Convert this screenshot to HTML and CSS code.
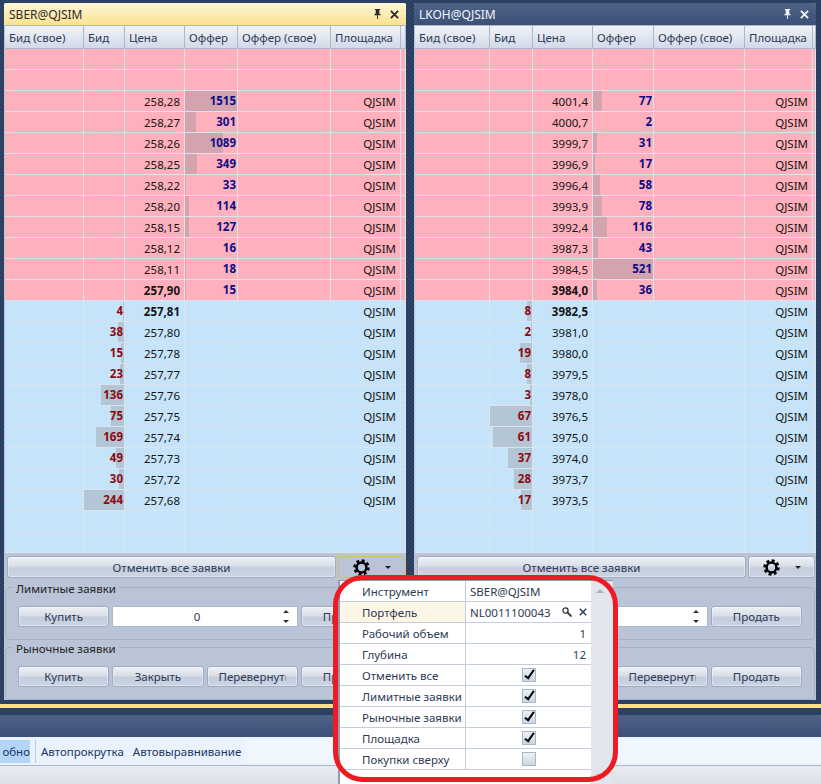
FILE: index.html
```html
<!DOCTYPE html>
<html>
  <head>
    <title>Стакан</title>
    <link rel="stylesheet" href="styles.css">
  </head>

  <body>
    <svg class="defs" width="0" height="0">
      <symbol id="gear" viewBox="0 0 18 18">
        <circle cx="9" cy="9" r="5.2" fill="none" stroke="#000" stroke-width="2.6"/>
        <circle cx="9" cy="9" r="7.2" fill="none" stroke="#000" stroke-width="3" stroke-dasharray="3 2.65"/>
      </symbol>
      <symbol id="pin" viewBox="0 0 10 11">
        <path d="M2 0h6v1H7v4l1.500 1v1H5.500v4h-1V7H1.500V6L3 5V1H2z"/>
      </symbol>
      <symbol id="cross" viewBox="0 0 10 10">
        <path d="M1 1l8 8M9 1l-8 8" fill="none" stroke="currentColor" stroke-width="2"/>
      </symbol>
    </svg>

    <div class="workspace">

      <div class="panel">
        <div class="title active">
          <span class="title-text">SBER@QJSIM</span>
          <svg class="pin"><use href="#pin"/></svg>
          <svg class="close"><use href="#cross"/></svg>
        </div>
        <table class="book book-sber">
          <colgroup><col class="c1"><col class="c2"><col class="c3"><col class="c4"><col class="c5"><col class="c6"><col></colgroup>
          <thead><tr><th>Бид (свое)</th><th>Бид</th><th>Цена</th><th>Оффер</th><th>Оффер (свое)</th><th>Площадка</th><th></th></tr></thead>
          <tbody class="asks">
            <tr><td></td><td></td><td></td><td></td><td></td><td></td><td></td></tr>
            <tr><td></td><td></td><td></td><td></td><td></td><td></td><td></td></tr>
            <tr><td></td><td></td><td class="price">258,28</td><td class="offer"><i class="bar" style="width:53px"></i><b>1515</b></td><td></td><td class="board">QJSIM</td><td></td></tr>
            <tr><td></td><td></td><td class="price">258,27</td><td class="offer"><i class="bar" style="width:11px"></i><b>301</b></td><td></td><td class="board">QJSIM</td><td></td></tr>
            <tr><td></td><td></td><td class="price">258,26</td><td class="offer"><i class="bar" style="width:38px"></i><b>1089</b></td><td></td><td class="board">QJSIM</td><td></td></tr>
            <tr><td></td><td></td><td class="price">258,25</td><td class="offer"><i class="bar" style="width:12px"></i><b>349</b></td><td></td><td class="board">QJSIM</td><td></td></tr>
            <tr><td></td><td></td><td class="price">258,22</td><td class="offer"><i class="bar" style="width:1px"></i><b>33</b></td><td></td><td class="board">QJSIM</td><td></td></tr>
            <tr><td></td><td></td><td class="price">258,20</td><td class="offer"><i class="bar" style="width:4px"></i><b>114</b></td><td></td><td class="board">QJSIM</td><td></td></tr>
            <tr><td></td><td></td><td class="price">258,15</td><td class="offer"><i class="bar" style="width:4px"></i><b>127</b></td><td></td><td class="board">QJSIM</td><td></td></tr>
            <tr><td></td><td></td><td class="price">258,12</td><td class="offer"><i class="bar" style="width:1px"></i><b>16</b></td><td></td><td class="board">QJSIM</td><td></td></tr>
            <tr><td></td><td></td><td class="price">258,11</td><td class="offer"><i class="bar" style="width:1px"></i><b>18</b></td><td></td><td class="board">QJSIM</td><td></td></tr>
            <tr><td></td><td></td><td class="price best">257,90</td><td class="offer"><i class="bar" style="width:1px"></i><b>15</b></td><td></td><td class="board">QJSIM</td><td></td></tr>
          </tbody>
          <tbody class="bids">
            <tr><td></td><td class="bid"><i class="bar" style="width:1px"></i><b>4</b></td><td class="price best">257,81</td><td></td><td></td><td class="board">QJSIM</td><td></td></tr>
            <tr><td></td><td class="bid"><i class="bar" style="width:6px"></i><b>38</b></td><td class="price">257,80</td><td></td><td></td><td class="board">QJSIM</td><td></td></tr>
            <tr><td></td><td class="bid"><i class="bar" style="width:3px"></i><b>15</b></td><td class="price">257,78</td><td></td><td></td><td class="board">QJSIM</td><td></td></tr>
            <tr><td></td><td class="bid"><i class="bar" style="width:4px"></i><b>23</b></td><td class="price">257,77</td><td></td><td></td><td class="board">QJSIM</td><td></td></tr>
            <tr><td></td><td class="bid"><i class="bar" style="width:23px"></i><b>136</b></td><td class="price">257,76</td><td></td><td></td><td class="board">QJSIM</td><td></td></tr>
            <tr><td></td><td class="bid"><i class="bar" style="width:13px"></i><b>75</b></td><td class="price">257,75</td><td></td><td></td><td class="board">QJSIM</td><td></td></tr>
            <tr><td></td><td class="bid"><i class="bar" style="width:28px"></i><b>169</b></td><td class="price">257,74</td><td></td><td></td><td class="board">QJSIM</td><td></td></tr>
            <tr><td></td><td class="bid"><i class="bar" style="width:8px"></i><b>49</b></td><td class="price">257,73</td><td></td><td></td><td class="board">QJSIM</td><td></td></tr>
            <tr><td></td><td class="bid"><i class="bar" style="width:5px"></i><b>30</b></td><td class="price">257,72</td><td></td><td></td><td class="board">QJSIM</td><td></td></tr>
            <tr><td></td><td class="bid"><i class="bar" style="width:41px"></i><b>244</b></td><td class="price">257,68</td><td></td><td></td><td class="board">QJSIM</td><td></td></tr>
            <tr><td></td><td></td><td></td><td></td><td></td><td></td><td></td></tr>
            <tr><td></td><td></td><td></td><td></td><td></td><td></td><td></td></tr>
          </tbody>
        </table>
        <div class="actions">
          <button class="btn cancel-all">Отменить все заявки</button>
          <button class="btn gear-btn open"><svg class="gear"><use href="#gear"/></svg><span class="caret"></span></button>
        </div>
        <fieldset class="group">
          <legend>Лимитные заявки</legend>
          <div class="group-row">
            <button class="btn">Купить</button>
            <div class="spin"><span class="spin-value">0</span><span class="spin-arrows"><span class="up"></span><span class="down"></span></span></div>
            <button class="btn">Продать</button>
          </div>
        </fieldset>
        <fieldset class="group">
          <legend>Рыночные заявки</legend>
          <div class="group-row">
            <button class="btn">Купить</button>
            <button class="btn">Закрыть</button>
            <button class="btn clip"><span>Перевернуть</span></button>
            <button class="btn">Продать</button>
          </div>
        </fieldset>
      </div>

      <div class="panel">
        <div class="title">
          <span class="title-text">LKOH@QJSIM</span>
          <svg class="pin"><use href="#pin"/></svg>
          <svg class="close"><use href="#cross"/></svg>
        </div>
        <table class="book book-lkoh">
          <colgroup><col class="c1"><col class="c2"><col class="c3"><col class="c4"><col class="c5"><col class="c6"><col></colgroup>
          <thead><tr><th>Бид (свое)</th><th>Бид</th><th>Цена</th><th>Оффер</th><th>Оффер (свое)</th><th>Площадка</th><th></th></tr></thead>
          <tbody class="asks">
            <tr><td></td><td></td><td></td><td></td><td></td><td></td><td></td></tr>
            <tr><td></td><td></td><td></td><td></td><td></td><td></td><td></td></tr>
            <tr><td></td><td></td><td class="price">4001,4</td><td class="offer"><i class="bar" style="width:9px"></i><b>77</b></td><td></td><td class="board">QJSIM</td><td></td></tr>
            <tr><td></td><td></td><td class="price">4000,7</td><td class="offer"><b>2</b></td><td></td><td class="board">QJSIM</td><td></td></tr>
            <tr><td></td><td></td><td class="price">3999,7</td><td class="offer"><i class="bar" style="width:4px"></i><b>31</b></td><td></td><td class="board">QJSIM</td><td></td></tr>
            <tr><td></td><td></td><td class="price">3996,9</td><td class="offer"><i class="bar" style="width:2px"></i><b>17</b></td><td></td><td class="board">QJSIM</td><td></td></tr>
            <tr><td></td><td></td><td class="price">3996,4</td><td class="offer"><i class="bar" style="width:7px"></i><b>58</b></td><td></td><td class="board">QJSIM</td><td></td></tr>
            <tr><td></td><td></td><td class="price">3993,9</td><td class="offer"><i class="bar" style="width:9px"></i><b>78</b></td><td></td><td class="board">QJSIM</td><td></td></tr>
            <tr><td></td><td></td><td class="price">3992,4</td><td class="offer"><i class="bar" style="width:14px"></i><b>116</b></td><td></td><td class="board">QJSIM</td><td></td></tr>
            <tr><td></td><td></td><td class="price">3987,3</td><td class="offer"><i class="bar" style="width:5px"></i><b>43</b></td><td></td><td class="board">QJSIM</td><td></td></tr>
            <tr><td></td><td></td><td class="price">3984,5</td><td class="offer"><i class="bar" style="width:61px"></i><b>521</b></td><td></td><td class="board">QJSIM</td><td></td></tr>
            <tr><td></td><td></td><td class="price best">3984,0</td><td class="offer"><i class="bar" style="width:4px"></i><b>36</b></td><td></td><td class="board">QJSIM</td><td></td></tr>
          </tbody>
          <tbody class="bids">
            <tr><td></td><td class="bid"><i class="bar" style="width:5px"></i><b>8</b></td><td class="price best">3982,5</td><td></td><td></td><td class="board">QJSIM</td><td></td></tr>
            <tr><td></td><td class="bid"><i class="bar" style="width:1px"></i><b>2</b></td><td class="price">3981,0</td><td></td><td></td><td class="board">QJSIM</td><td></td></tr>
            <tr><td></td><td class="bid"><i class="bar" style="width:12px"></i><b>19</b></td><td class="price">3980,0</td><td></td><td></td><td class="board">QJSIM</td><td></td></tr>
            <tr><td></td><td class="bid"><i class="bar" style="width:5px"></i><b>8</b></td><td class="price">3979,5</td><td></td><td></td><td class="board">QJSIM</td><td></td></tr>
            <tr><td></td><td class="bid"><i class="bar" style="width:2px"></i><b>3</b></td><td class="price">3978,0</td><td></td><td></td><td class="board">QJSIM</td><td></td></tr>
            <tr><td></td><td class="bid"><i class="bar" style="width:43px"></i><b>67</b></td><td class="price">3976,5</td><td></td><td></td><td class="board">QJSIM</td><td></td></tr>
            <tr><td></td><td class="bid"><i class="bar" style="width:39px"></i><b>61</b></td><td class="price">3975,0</td><td></td><td></td><td class="board">QJSIM</td><td></td></tr>
            <tr><td></td><td class="bid"><i class="bar" style="width:24px"></i><b>37</b></td><td class="price">3974,0</td><td></td><td></td><td class="board">QJSIM</td><td></td></tr>
            <tr><td></td><td class="bid"><i class="bar" style="width:18px"></i><b>28</b></td><td class="price">3973,7</td><td></td><td></td><td class="board">QJSIM</td><td></td></tr>
            <tr><td></td><td class="bid"><i class="bar" style="width:11px"></i><b>17</b></td><td class="price">3973,5</td><td></td><td></td><td class="board">QJSIM</td><td></td></tr>
            <tr><td></td><td></td><td></td><td></td><td></td><td></td><td></td></tr>
            <tr><td></td><td></td><td></td><td></td><td></td><td></td><td></td></tr>
          </tbody>
        </table>
        <div class="actions">
          <button class="btn cancel-all">Отменить все заявки</button>
          <button class="btn gear-btn"><svg class="gear"><use href="#gear"/></svg><span class="caret"></span></button>
        </div>
        <fieldset class="group">
          <legend>Лимитные заявки</legend>
          <div class="group-row">
            <button class="btn">Купить</button>
            <div class="spin"><span class="spin-value">0</span><span class="spin-arrows"><span class="up"></span><span class="down"></span></span></div>
            <button class="btn">Продать</button>
          </div>
        </fieldset>
        <fieldset class="group">
          <legend>Рыночные заявки</legend>
          <div class="group-row">
            <button class="btn">Купить</button>
            <button class="btn">Закрыть</button>
            <button class="btn clip"><span>Перевернуть</span></button>
            <button class="btn">Продать</button>
          </div>
        </fieldset>
      </div>

    </div>

    <div class="bottom-accent"></div>
    <div class="bottom-title"></div>
    <div class="bottom-tools">
      <span class="tool on">обно</span>
      <span class="tool-sep"></span>
      <span class="tool">Автопрокрутка</span>
      <span class="tool">Автовыравнивание</span>
      <span class="tool-rest"></span>
    </div>
    <div class="bottom-status"></div>

    <div class="popup">
      <table class="props">
        <tr><td>Инструмент</td><td class="val">SBER@QJSIM</td></tr>
        <tr class="hot"><td>Портфель</td><td class="val portfolio">NL0011100043
          <svg class="lens" viewBox="0 0 10 10"><circle cx="3.500" cy="3.500" r="2.600" fill="none" stroke="#333" stroke-width="1.300"/><path d="M5.500 5.500L9.500 9.500" stroke="#333" stroke-width="1.800"/></svg>
          <svg class="clear"><use href="#cross"/></svg></td></tr>
        <tr><td>Рабочий объем</td><td class="num">1</td></tr>
        <tr><td>Глубина</td><td class="num">12</td></tr>
        <tr><td>Отменить все</td><td class="chk"><span class="box on"></span></td></tr>
        <tr><td>Лимитные заявки</td><td class="chk"><span class="box on"></span></td></tr>
        <tr><td>Рыночные заявки</td><td class="chk"><span class="box on"></span></td></tr>
        <tr><td>Площадка</td><td class="chk"><span class="box on"></span></td></tr>
        <tr><td>Покупки сверху</td><td class="chk"><span class="box"></span></td></tr>
      </table>
      <div class="vscroll"><span class="up"></span><span class="down"></span></div>
    </div>
    <div class="red-mark"></div>
  </body>
</html>
```

FILE: styles.css
```css
html, body {
  margin: 0;
  height: 100%;
}
body {
  width: 821px;
  height: 784px;
  overflow: hidden;
  position: relative;
  font-family: "Noto Sans", "Open Sans", sans-serif;
  font-size: 11.5px;
  color: #2b3a55;
  background-color: #293d5e;
  background-image:
    linear-gradient(45deg, #2f4568 25%, transparent 25%, transparent 75%, #2f4568 75%),
    linear-gradient(45deg, #2f4568 25%, transparent 25%, transparent 75%, #2f4568 75%);
  background-size: 4px 4px;
  background-position: 0 0, 2px 2px;
}
.defs {
  position: absolute;
}

.workspace {
  display: flex;
  gap: 8px;
  padding: 3px 0 0 4px;
}
.panel {
  width: 402px;
  height: 697px;
  background: #b9c5d7;
  border-radius: 2px 2px 0 0;
}

.title {
  display: flex;
  align-items: center;
  height: 22px;
  padding: 0 7px 0 5px;
  color: #f3f6fb;
  font-size: 12px;
  background: linear-gradient(#4f6388, #3c5078);
  border-radius: 2px 2px 0 0;
}
.title.active {
  color: #2b2b2b;
  background: linear-gradient(#fdf7d8, #fbe190);
}
.title-text {
  flex: 1;
}
.pin {
  width: 9px;
  height: 10px;
  fill: currentColor;
  margin-right: 8px;
}
.close {
  width: 9px;
  height: 9px;
}

.book {
  table-layout: fixed;
  border-collapse: separate;
  border-spacing: 0;
  width: 401px;
  margin-left: 1px;
  color: #141414;
}
.book-sber .c1 { width: 79px; }
.book-sber .c2 { width: 41px; }
.book-sber .c3 { width: 60px; }
.book-sber .c4 { width: 53px; }
.book-sber .c5 { width: 93px; }
.book-sber .c6 { width: 70px; }
.book-lkoh .c1 { width: 75px; }
.book-lkoh .c2 { width: 43px; }
.book-lkoh .c3 { width: 60px; }
.book-lkoh .c4 { width: 61px; }
.book-lkoh .c5 { width: 91px; }
.book-lkoh .c6 { width: 68px; }

.book th {
  height: 24px;
  padding: 0 0 0 4px;
  box-sizing: border-box;
  overflow: hidden;
  white-space: nowrap;
  text-align: left;
  font-weight: normal;
  color: #2b3a55;
  background: linear-gradient(#f0f3f8, #d2dae7);
  border-right: 1px solid #aab7ce;
  border-top: 1px solid #a9b6cd;
  border-bottom: 1px solid #a9b6cd;
}
.book td {
  position: relative;
  height: 21px;
  padding: 0;
  box-sizing: border-box;
  overflow: hidden;
  white-space: nowrap;
  text-align: right;
  border-right: 1px solid #dbe3ee;
  border-bottom: 1px solid #dbe3ee;
}
.asks td {
  background: #ffb0bd;
}
.bids td {
  background: #c6e4f9;
}
.book td.price,
.book td.board {
  padding-right: 4px;
}
.best {
  font-weight: bold;
}
.book b {
  position: relative;
  top: -1px;
  padding-right: 1px;
}
.offer b {
  color: #0d0d85;
}
.bid b {
  color: #8c0a12;
}
.bar {
  position: absolute;
  top: 0;
  bottom: 0;
}
.offer .bar {
  left: 0;
  background: #d3a3ae;
}
.bid .bar {
  right: 0;
  background: #b4c5d5;
}

.actions {
  display: flex;
  gap: 2px;
  padding: 3px 1px 0 3px;
  height: 22px;
}
.btn {
  font: inherit;
  color: #2b3a55;
  height: 21px;
  padding: 0;
  border: 1px solid #9eacc4;
  border-radius: 3px;
  background: linear-gradient(#eef1f5, #d9dee7 45%, #c5cedd 55%, #ccd4e2);
  box-shadow: inset 0 0 0 1px rgba(255, 255, 255, .35);
  overflow: hidden;
  white-space: nowrap;
}
.cancel-all {
  flex: 1;
  height: 22px;
}
.gear-btn {
  display: flex;
  align-items: center;
  width: 67px;
  height: 22px;
  padding-left: 14px;
  box-sizing: border-box;
}
.gear-btn.open {
  border-color: #d9bd6a;
  background: #b9c5d7;
  box-shadow: none;
}
.gear {
  width: 17px;
  height: 17px;
}
.caret {
  width: 0;
  height: 0;
  margin-left: 15px;
  border: 3px solid transparent;
  border-top-color: #222;
  border-bottom-width: 0;
}

.group {
  margin: 0 1px;
  padding: 12px 12px 0;
  height: 60px;
  box-sizing: border-box;
  border: 1px solid #a5b2c7;
  border-radius: 4px;
}
.actions + .group {
  margin-top: 2px;
}
.group legend {
  position: relative;
  top: 2px;
  padding: 0 3px;
  margin-left: -5px;
  line-height: 14px;
  color: #222;
}
.group-row {
  display: grid;
  grid-template-columns: repeat(4, 1fr);
  gap: 3px;
}
.spin {
  grid-column: span 2;
  display: flex;
  align-items: center;
  height: 21px;
  background: #fff;
  border: 1px solid #aab7cc;
  box-sizing: border-box;
}
.spin-value {
  flex: 1;
  padding-right: 2px;
  text-align: center;
}
.spin-arrows {
  display: flex;
  flex-direction: column;
  gap: 7px;
  width: 14px;
}
.up, .down {
  width: 0;
  height: 0;
  border: 3px solid transparent;
  border-top-width: 0;
  border-bottom-color: #333;
}
.down {
  border-bottom-width: 0;
  border-top-width: 3px;
  border-top-color: #333;
}
.clip span {
  display: block;
  width: 67px;
  margin-left: 11px;
  overflow: hidden;
  text-align: left;
}

.bottom-accent {
  height: 4px;
  margin-top: 4px;
  background: #fde08f;
}
.bottom-title {
  height: 22px;
  margin-top: 7px;
  background: linear-gradient(#4f6388, #3c5078);
}
.bottom-tools {
  display: flex;
  align-items: center;
  height: 28px;
  background: #eaf3fd;
  border-bottom: 1px solid #a9b6cd;
  color: #1b3565;
}
.tool {
  line-height: 23px;
  margin-right: 9px;
}
.tool.on {
  width: 30px;
  margin-right: 5px;
  background: #b3d6f6;
  text-align: right;
}
.tool-sep {
  width: 1px;
  height: 23px;
  margin-right: 5px;
  background: #bccbe0;
}
.tool-rest {
  flex: 1;
  height: 24px;
  margin-left: -5px;
  background: #eff6fd;
}
.bottom-status {
  height: 18px;
  background: linear-gradient(#e8ebf0, #dde1e8);
}

.popup {
  position: absolute;
  left: 338px;
  top: 580px;
  width: 275px;
  height: 204px;
  display: flex;
  background: #fff;
  border-left: 2px solid #8f9cb4;
  border-top: 1px solid #8f9cb4;
  box-sizing: border-box;
  color: #2d3a52;
}
.props {
  width: 251px;
  height: 0;
  table-layout: fixed;
  border-collapse: separate;
  border-spacing: 0;
}
.props td {
  height: 21px;
  padding: 0;
  box-sizing: border-box;
  border-bottom: 1px solid #c3cddc;
  white-space: nowrap;
}
.props td:first-child {
  width: 126px;
  padding-left: 22px;
  border-right: 1px solid #c3cddc;
}
.props .hot td:first-child {
  background: #fdf6e6;
}
.val {
  padding-left: 4px !important;
}
.portfolio {
  position: relative;
}
.lens {
  position: absolute;
  left: 96px;
  top: 5px;
  width: 10px;
  height: 10px;
}
.clear {
  position: absolute;
  left: 113px;
  top: 6px;
  width: 8px;
  height: 8px;
  color: #34425c;
}
.num {
  text-align: right;
  padding-right: 5px !important;
}
.chk {
  text-align: center;
}
.box {
  display: block;
  position: relative;
  width: 12px;
  height: 12px;
  margin: 0 auto;
  border: 1px solid #a9b5c9;
  background: linear-gradient(#eef1f6, #ccd4e2);
}
.box.on::after {
  content: "";
  position: absolute;
  left: 4px;
  top: -1px;
  width: 3px;
  height: 9px;
  border: solid #000;
  border-width: 0 2px 2px 0;
  transform: rotate(35deg);
}
.vscroll {
  flex: 1;
  display: flex;
  flex-direction: column;
  align-items: center;
  justify-content: space-between;
  padding: 8px 4px 6px 0;
  background: #e2e5eb;
}
.vscroll .up {
  border-width: 0 4px 4px;
  border-bottom-color: #a9b3c4;
}
.vscroll .down {
  border-width: 4px 4px 0;
  border-top-color: #a9b3c4;
}
.red-mark {
  position: absolute;
  left: 333px;
  top: 575px;
  width: 285px;
  height: 207px;
  box-sizing: border-box;
  border: 5px solid #ed1c24;
  border-radius: 30px;
}
```
